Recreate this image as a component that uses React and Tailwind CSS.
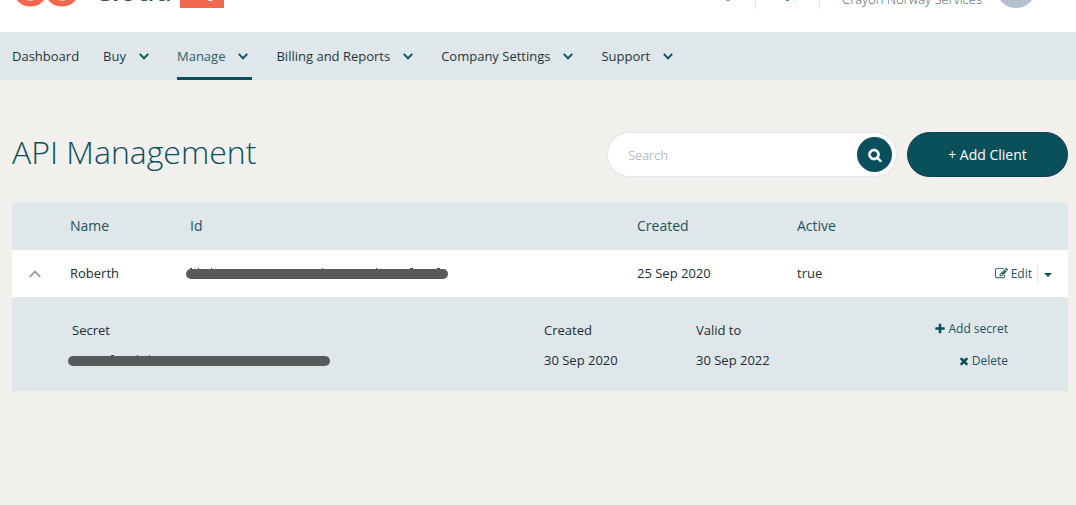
import React from "react";

const PATHS = {
  search:
    "M1216 832q0-185-131.5-316.5t-316.5-131.5-316.5 131.5-131.5 316.5 131.5 316.5 316.5 131.5 316.5-131.5 131.5-316.5zm512 832q0 52-38 90t-90 38q-54 0-90-38l-343-342q-179 124-399 124-143 0-273.5-55.5t-225-150-150-225-55.5-273.5 55.5-273.5 150-225 225-150 273.5-55.5 273.5 55.5 225 150 150 225 55.5 273.5q0 220-124 399l343 343q37 37 37 90z",
  plus:
    "M1600 736v192q0 40-28 68t-68 28h-416v416q0 40-28 68t-68 28h-192q-40 0-68-28t-28-68v-416h-416q-40 0-68-28t-28-68v-192q0-40 28-68t68-28h416v-416q0-40 28-68t68-28h192q40 0 68 28t28 68v416h416q40 0 68 28t28 68z",
  times:
    "M1490 1322q0 40-28 68l-136 136q-28 28-68 28t-68-28l-294-294-294 294q-28 28-68 28t-68-28l-136-136q-28-28-28-68t28-68l294-294-294-294q-28-28-28-68t28-68l136-136q28-28 68-28t68 28l294 294 294-294q28-28 68-28t68 28l136 136q28 28 28 68t-28 68l-294 294 294 294q28 28 28 68z",
  edit:
    "M888 1184l116-116-152-152-116 116v56h96v96h56zm440-720q-16-16-33 1l-350 350q-17 17-1 33t33-1l350-350q17-17 1-33zm80 594v190q0 119-84.5 203.5t-203.5 84.5h-832q-119 0-203.5-84.5t-84.5-203.5v-832q0-119 84.5-203.5t203.5-84.5h832q63 0 117 25 15 7 18 23 3 17-9 29l-49 49q-14 14-32 8-23-6-45-6h-832q-66 0-113 47t-47 113v832q0 66 47 113t113 47h832q66 0 113-47t47-113v-126q0-13 9-22l64-64q15-15 35-7t20 29zm-96-738l288 288-672 672h-288v-288zm444 132l-92 92-288-288 92-92q28-28 68-28t68 28l152 152q28 28 28 68t-28 68z",
};

function Icon({ name, className }) {
  return (
    <svg viewBox="0 0 1792 1792" fill="currentColor" className={className} aria-hidden="true">
      <path d={PATHS[name]} />
    </svg>
  );
}

function Chevron() {
  return (
    <svg viewBox="0 0 10 7" className="h-[7px] w-[10px]" fill="none" stroke="#0a4f5c" strokeWidth="1.9" aria-hidden="true">
      <path d="M0.8 0.9 5 5.3 9.2 0.9" />
    </svg>
  );
}

function Redacted({ specks }) {
  return (
    <svg viewBox="0 0 262 12" className="-ml-1 block h-3 w-[262px]" role="img" aria-label="Hidden value">
      {specks.map(([x, w]) => (
        <rect key={x} x={x} y="0" width={w} height="2" fill="#3c4a50" />
      ))}
      <rect x="0" y="1" width="262" height="10" rx="5" fill="#58595a" />
    </svg>
  );
}

const NAV = [
  { label: "Dashboard" },
  { label: "Buy", menu: true },
  { label: "Manage", menu: true, active: true },
  { label: "Billing and Reports", menu: true },
  { label: "Company Settings", menu: true },
  { label: "Support", menu: true },
];

function Header() {
  return (
    <header className="flex h-8 items-end justify-between overflow-hidden bg-white pr-10 pl-3">
      <a href="#home" aria-label="Cloud iQ" className="flex h-16 shrink-0 items-start text-[#34535f]">
        <svg viewBox="0 0 70 40" className="h-10 w-[70px]" fill="none" stroke="#f0694e" strokeWidth="6" aria-hidden="true">
          <circle cx="18.5" cy="20.5" r="15" />
          <circle cx="50" cy="20.5" r="15" />
        </svg>
        <span className="ml-3 text-[28px] leading-[44px] font-semibold">Cloud</span>
        <span className="ml-2 flex h-10 w-11 items-center justify-center bg-[#f0694e] text-2xl font-semibold text-white">
          iQ
        </span>
      </a>
      <div className="flex h-14 shrink-0 items-start text-[13px] text-[#4c5f69]">
        <button type="button" aria-label="Notifications" className="flex h-[33px] w-[55px] items-end justify-center border-r border-[#dfe7ea] pb-2">
          <svg viewBox="0 0 16 16" className="size-4" fill="none" stroke="#3d7480" strokeWidth="1.5" aria-hidden="true">
            <path d="M2 12.5h12l-1.5-2V6.5a4.5 4.5 0 0 0-9 0v4z" />
            <path d="M6.5 15h3" />
          </svg>
        </button>
        <button type="button" aria-label="Cart" className="flex h-[33px] w-16 items-end justify-center border-r border-[#dfe7ea] pb-2">
          <svg viewBox="0 0 16 16" className="size-4" fill="none" stroke="#3d7480" strokeWidth="1.5" aria-hidden="true">
            <path d="M0 2h3l2 9h8l2-7H4" />
            <circle cx="7.5" cy="14.500" r="1" />
            <circle cx="14.500" cy="14" r="0.6" />
          </svg>
        </button>
        <span className="ml-[22px] leading-[46px] font-light">Crayon Norway Services</span>
        <span className="ml-[14px] h-8 w-10 rounded-b-full bg-[#b4c0cc]" />
      </div>
    </header>
  );
}

function Nav() {
  return (
    <nav className="flex min-h-12 flex-wrap gap-x-6 bg-[#dfe7ea] px-3 text-[13px] text-[#1f353d]">
      {NAV.map((item) => (
        <a
          key={item.label}
          href="#nav"
          className={
            item.active
              ? "flex h-12 items-center gap-[13px] border-b-3 border-[#0a4f5c] pt-1 text-[#2a5f6c]"
              : "flex h-12 items-center gap-[13px] border-b-3 border-transparent pt-1"
          }
        >
          {item.label}
          {item.menu && (
            <span className="pr-1">
              <Chevron />
            </span>
          )}
        </a>
      ))}
    </nav>
  );
}

function Secrets() {
  return (
    <table className="w-full table-fixed text-left">
      <colgroup>
        <col />
        <col className="w-[152px]" />
        <col className="w-[312px]" />
      </colgroup>
      <thead>
        <tr className="h-[30px]">
          <th className="font-normal">Secret</th>
          <th className="font-normal">Created</th>
          <th className="font-normal">Valid to</th>
        </tr>
      </thead>
      <tbody>
        <tr className="h-[30px]">
          <td>
            <Redacted specks={[[43, 3], [69, 1], [81, 1]]} />
          </td>
          <td>30 Sep 2020</td>
          <td>30 Sep 2022</td>
        </tr>
      </tbody>
    </table>
  );
}

export default function App() {
  return (
    <div className="min-h-screen bg-[#f2f0ec] font-['Open_Sans',sans-serif] text-[13px] text-[#1b2c33]">
      <Header />
      <Nav />
      <main className="pt-[52px] pr-2 pl-3">
        <div className="flex flex-wrap items-start justify-between gap-4">
          <h1 className="text-[32px] leading-[39px] font-light text-[#0a4f5c]">API Management</h1>
          <div className="flex gap-[10px]">
            <form className="flex h-[45px] w-[290px] items-center rounded-full border border-[#dfe7ea] bg-white pr-1 pl-5">
              <input
                type="search"
                aria-label="Search"
                placeholder="Search"
                className="h-6 min-w-0 flex-1 bg-transparent pt-px outline-none placeholder:font-light placeholder:text-[#8fa2aa]"
              />
              <button type="button" aria-label="Run search" className="flex size-[35px] items-center justify-center rounded-full bg-[#0a4f5c] text-white">
                <Icon name="search" className="size-[14px] stroke-current stroke-[80px]" />
              </button>
            </form>
            <button type="button" className="h-[45px] w-[161px] rounded-full border border-[#0b404c] bg-[#0a4f5c] text-sm text-white">
              + Add Client
            </button>
          </div>
        </div>

        <table className="mt-[25px] w-full table-fixed text-left">
          <colgroup>
            <col className="w-[58px]" />
            <col className="w-[120px]" />
            <col />
            <col className="w-[160px]" />
            <col className="w-[271px]" />
          </colgroup>
          <thead>
            <tr className="h-12 text-sm text-[#1d5361]">
              <th className="rounded-tl bg-[#dfe7ea]" aria-label="Expand" />
              <th className="bg-[#dfe7ea] font-normal">Name</th>
              <th className="bg-[#dfe7ea] font-normal">Id</th>
              <th className="bg-[#dfe7ea] font-normal">Created</th>
              <th className="rounded-tr bg-[#dfe7ea] font-normal">Active</th>
            </tr>
          </thead>
          <tbody>
            <tr className="h-[47px] bg-white">
              <td>
                <button type="button" aria-label="Collapse row" className="ml-4 flex h-6 w-[14px] items-center justify-center">
                  <svg viewBox="0 0 12 8" className="h-2 w-3" fill="none" stroke="#8f9496" strokeWidth="1.8" aria-hidden="true">
                    <path d="M0.7 7 6 1.5 11.3 7" />
                  </svg>
                </button>
              </td>
              <td>Roberth</td>
              <td>
                <Redacted specks={[[4, 2], [12, 1], [25, 1], [136, 1], [190, 1], [224, 3], [251, 3]]} />
              </td>
              <td>25 Sep 2020</td>
              <td>
                <div className="flex items-center justify-between pr-4">
                  <span>true</span>
                  <div className="flex items-center text-xs text-[#1d5361]">
                    <button type="button" className="flex items-center gap-[3px] pr-[5px]">
                      <Icon name="edit" className="size-[13px]" />
                      Edit
                    </button>
                    <button type="button" aria-label="More actions" className="flex h-[18px] items-center border-l border-[#dfe7ea] pl-[6px]">
                      <svg viewBox="0 0 8 4" className="mt-[2px] h-1 w-2" fill="#0a4f5c" aria-hidden="true">
                        <path d="M0 0h8L4 4z" />
                      </svg>
                    </button>
                  </div>
                </div>
              </td>
            </tr>
            <tr>
              <td colSpan={5} className="rounded-t bg-[#dfe7ea] p-0">
                <div className="flex px-[60px] pt-[19px] pb-[15px]">
                  <div className="min-w-0 flex-1">
                    <Secrets />
                  </div>
                  <div className="-ml-20 flex w-20 flex-col items-end text-xs text-[#1d5361]">
                    <button type="button" className="flex h-[26px] items-center gap-[2px] whitespace-nowrap">
                      <Icon name="plus" className="size-3 text-[#0a4f5c]" />
                      Add secret
                    </button>
                    <button type="button" className="mt-[6px] flex h-[26px] items-center gap-[2px]">
                      <Icon name="times" className="size-3 text-[#0a4f5c]" />
                      Delete
                    </button>
                  </div>
                </div>
              </td>
            </tr>
          </tbody>
        </table>
      </main>
    </div>
  );
}
